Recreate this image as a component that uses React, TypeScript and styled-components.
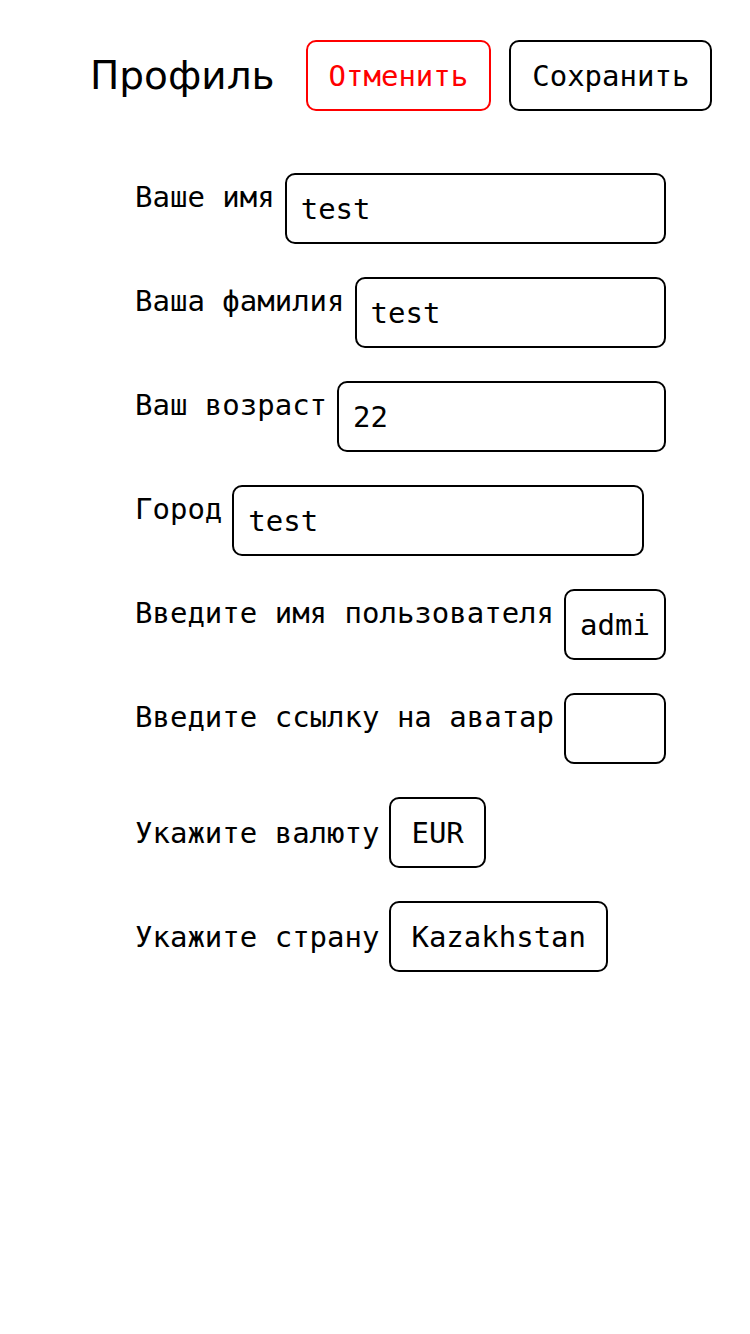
import React from "react";
import styled, { createGlobalStyle } from "styled-components";

const GlobalStyle = createGlobalStyle`
  html, body {
    margin: 0;
    padding: 0;
    background: #ffffff;
  }
  body {
    font-family: "DejaVu Sans Mono", monospace;
    color: #000;
  }
`;

const Page = styled.div`
  display: flex;
  flex-direction: column;
  padding-top: 40px;
`;

const Header = styled.header`
  display: flex;
  align-items: center;
  padding-left: 90px;
`;

const Title = styled.h1`
  margin: 0 31px 0 0;
  font-family: "DejaVu Sans", sans-serif;
  font-weight: 400;
  font-size: 39px;
  line-height: 1;
`;

const Actions = styled.div`
  display: flex;
  gap: 18px;
`;

const Button = styled.button<{ $danger?: boolean }>`
  height: 71px;
  padding: 0 21px;
  background: #fff;
  border: 2px solid ${(p) => (p.$danger ? "#ff0000" : "#000")};
  color: ${(p) => (p.$danger ? "#ff0000" : "#000")};
  border-radius: 10px;
  font-family: "DejaVu Sans Mono", monospace;
  font-size: 29px;
`;

const Form = styled.form`
  display: flex;
  flex-direction: column;
  gap: 33px;
  margin-top: 62px;
  padding-left: 135px;
  width: 531px;
`;

const Row = styled.div<{ $center?: boolean }>`
  display: flex;
  align-items: ${(p) => (p.$center ? "center" : "flex-start")};
  gap: 10px;
`;

const Label = styled.label<{ $center?: boolean }>`
  font-size: 29px;
  line-height: 34px;
  padding-top: ${(p) => (p.$center ? "0" : "7px")};
  white-space: nowrap;
`;

const Input = styled.input<{ $w?: number }>`
  box-sizing: border-box;
  ${(p) => (p.$w ? `width: ${p.$w}px; flex: none;` : "flex: 1; min-width: 0;")}
  height: 71px;
  padding: 0 14px;
  border: 2px solid #000;
  border-radius: 10px;
  font-family: "DejaVu Sans Mono", monospace;
  font-size: 29px;
  color: #000;
  background: #fff;
  outline: none;
`;

const Select = styled.select`
  box-sizing: border-box;
  appearance: none;
  height: 71px;
  padding: 0 20px;
  border: 2px solid #000;
  border-radius: 10px;
  font-family: "DejaVu Sans Mono", monospace;
  font-size: 29px;
  color: #000;
  background: #fff;
  outline: none;
`;

const fields: { label: string; value: string; w?: number }[] = [
  { label: "Ваше имя", value: "test" },
  { label: "Ваша фамилия", value: "test" },
  { label: "Ваш возраст", value: "22" },
  { label: "Город", value: "test", w: 412 },
  { label: "Введите имя пользователя", value: "admin" },
  { label: "Введите ссылку на аватар", value: "" },
];

export default function App() {
  return (
    <>
      <GlobalStyle />
      <Page>
        <Header>
          <Title>Профиль</Title>
          <Actions>
            <Button $danger type="button">Отменить</Button>
            <Button type="button">Сохранить</Button>
          </Actions>
        </Header>
        <Form onSubmit={(e) => e.preventDefault()}>
          {fields.map((f) => (
            <Row key={f.label}>
              <Label>{f.label}</Label>
              <Input $w={f.w} defaultValue={f.value} />
            </Row>
          ))}
          <Row $center>
            <Label $center>Укажите валюту</Label>
            <Select defaultValue="EUR">
              <option value="EUR">EUR</option>
              <option value="RUB">RUB</option>
              <option value="USD">USD</option>
            </Select>
          </Row>
          <Row $center>
            <Label $center>Укажите страну</Label>
            <Select defaultValue="Kazakhstan">
              <option value="Kazakhstan">Kazakhstan</option>
              <option value="Russia">Russia</option>
              <option value="Belarus">Belarus</option>
              <option value="Armenia">Armenia</option>
            </Select>
          </Row>
        </Form>
      </Page>
    </>
  );
}
